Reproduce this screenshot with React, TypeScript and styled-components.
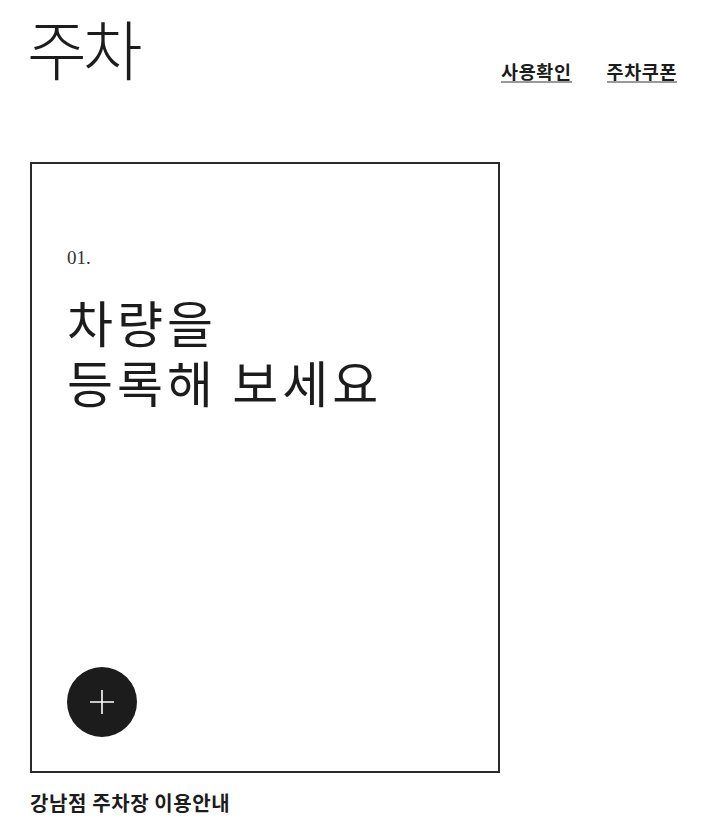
import styled, { createGlobalStyle } from 'styled-components'

const GlobalStyle = createGlobalStyle`
  html, body {
    margin: 0;
    padding: 0;
    background: #ffffff;
    color: #1c1c1c;
    font-family: "Noto Sans CJK KR", "Noto Sans", sans-serif;
  }
`

const Page = styled.div`
  display: flex;
  flex-direction: column;
  padding: 0 33px 0 30px;
`

const Header = styled.header`
  display: flex;
  justify-content: space-between;
  align-items: flex-start;
  height: 102px;
`

const Title = styled.h1`
  margin: 12px 0 0 -3px;
  font-size: 65px;
  font-weight: 300;
  line-height: 70px;
  letter-spacing: -4px;
`

const Nav = styled.nav`
  display: flex;
  gap: 35px;
  margin-top: 61px;
`

const NavLink = styled.a`
  font-size: 18.5px;
  font-weight: 700;
  color: #1c1c1c;
  text-decoration: none;
  border-bottom: 2px solid #9a9a9a;
  line-height: 20px;
  letter-spacing: 0.6px;
`

const Card = styled.section`
  display: flex;
  flex-direction: column;
  justify-content: space-between;
  box-sizing: border-box;
  width: 470px;
  height: 611px;
  margin-top: 60px;
  border: 2px solid #2a2a2a;
  padding: 83px 35px 34px 35px;
`

const Step = styled.span`
  display: block;
  font-family: "Liberation Serif", serif;
  font-size: 19px;
  color: #333;
`

const Heading = styled.h2`
  margin: 22px 0 0;
  font-size: 50px;
  font-weight: 400;
  line-height: 60px;
  letter-spacing: 4px;
`

const AddButton = styled.button`
  display: flex;
  align-items: center;
  justify-content: center;
  width: 70px;
  height: 70px;
  padding: 0;
  border: none;
  border-radius: 50%;
  background: #1c1c1c;
  cursor: pointer;
`

const Footer = styled.h3`
  margin: 15px 0 0;
  font-size: 20px;
  font-weight: 700;
  letter-spacing: 0.6px;
`

export default function App() {
  return (
    <>
      <GlobalStyle />
      <Page>
        <Header>
          <Title>주차</Title>
          <Nav>
            <NavLink href="#">사용확인</NavLink>
            <NavLink href="#">주차쿠폰</NavLink>
          </Nav>
        </Header>
        <Card>
          <div>
            <Step>01.</Step>
            <Heading>
              차량을
              <br />
              등록해 보세요
            </Heading>
          </div>
          <AddButton aria-label="차량 등록">
            <svg width="26" height="26" viewBox="0 0 26 26" fill="none">
              <path d="M13 1v24M1 13h24" stroke="#fff" strokeWidth="1.6" />
            </svg>
          </AddButton>
        </Card>
        <Footer>강남점 주차장 이용안내</Footer>
      </Page>
    </>
  )
}
